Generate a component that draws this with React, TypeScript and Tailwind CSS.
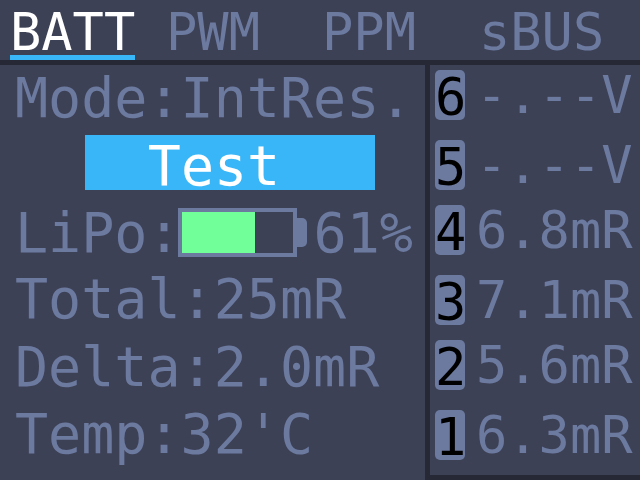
const tabs = [
  { label: 'BATT', width: 'w-[125px]', ml: 'ml-[10px]' },
  { label: 'PWM', width: 'w-[94px]', ml: 'ml-[31px]' },
  { label: 'PPM', width: 'w-[94px]', ml: 'ml-[62px]' },
  { label: 'sBUS', width: 'w-[125px]', ml: 'ml-[63px]' },
]

const cells = [
  { id: 6, value: '-.--V', top: 'mt-[5px]' },
  { id: 5, value: '-.--V', top: 'mt-[20px]' },
  { id: 4, value: '6.8mR', top: 'mt-[15px]' },
  { id: 3, value: '7.1mR', top: 'mt-[20px]' },
  { id: 2, value: '5.6mR', top: 'mt-[15px]' },
  { id: 1, value: '6.3mR', top: 'mt-[20px]' },
]

function Battery() {
  return (
    <div className="flex items-center ml-[-3px] mr-[7px]">
      <div className="w-[119px] h-[49px] border-4 border-[#6c7aa0]">
        <div className="w-[73px] h-full bg-[#70ff99]" />
      </div>
      <div className="w-[10px] h-[29px] bg-[#6c7aa0] rounded-r-[5px]" />
    </div>
  )
}

export default function App() {
  return (
    <div className="w-[640px] h-[480px] overflow-hidden bg-[#3d4156] text-[#6c7aa0] font-['DejaVu_Sans_Mono',monospace] flex flex-col">
      <div className="h-[60px] flex shrink-0">
        {tabs.map((tab, i) => (
          <div
            key={tab.label}
            className={`${tab.width} ${tab.ml} h-[60px] text-center text-[52px] leading-[64px] whitespace-nowrap ${i === 0 ? 'text-white border-b-[5px] border-[#38b6f7]' : ''}`}
          >
            {tab.label}
          </div>
        ))}
      </div>
      <div className="h-[5px] bg-[#262935] shrink-0" />
      <div className="flex flex-1 min-h-0">
        <div className="w-[425px] text-[55px] leading-[66px] pl-[15px] whitespace-nowrap">
          <div className="h-[70px]">Mode:IntRes.</div>
          <div className="h-[55px] w-[290px] ml-[70px] pr-[32px] bg-[#38b6f7] text-white text-center leading-[62px]">Test</div>
          <div className="h-[67px] mt-[9px] flex items-center">
            LiPo:
            <Battery />
            61%
          </div>
          <div className="h-[68px]">Total:25mR</div>
          <div className="h-[67px]">Delta:2.0mR</div>
          <div className="h-[68px]">Temp:32'C</div>
        </div>
        <div className="w-[5px] bg-[#262935]" />
        <div className="flex-1 border-b-[5px] border-[#262935] pl-[5px]">
          {cells.map((cell) => (
            <div key={cell.id} className={`${cell.top} h-[50px] flex items-center`}>
              <div className="w-[30px] h-[50px] rounded-[5px] bg-[#6c7aa0] text-black text-center text-[52px] leading-[54px]">
                {cell.id}
              </div>
              <div className="pl-[11px] text-[52px] leading-[54px] whitespace-nowrap">{cell.value}</div>
            </div>
          ))}
        </div>
      </div>
    </div>
  )
}
